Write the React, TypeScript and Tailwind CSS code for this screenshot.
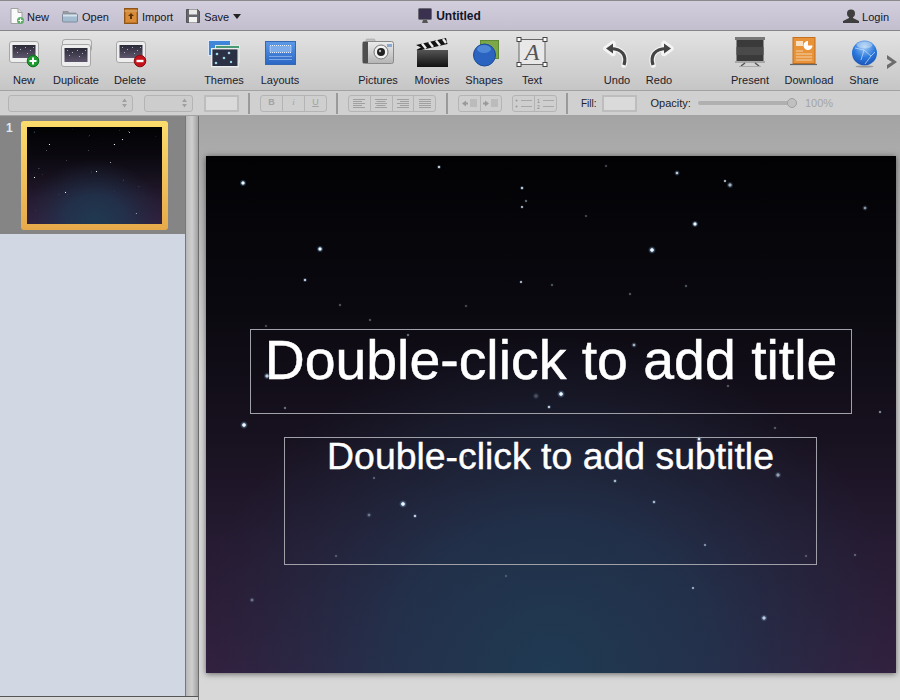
import React from "react";

const STARS: [number, number, number, number][] = [
  [37, 27, 1.8, 1], [114, 93, 1.8, 1], [99, 124, 1.2, 0.8], [38, 269, 2, 1], [446, 94, 2, 1], [489, 68, 1.8, 1],
  [316, 32, 1.2, 0.8], [316, 51, 1, 0.7], [233, 11, 1.2, 0.8], [471, 17, 1.5, 0.8], [524, 29, 1.8, 0.7], [519, 25, 1, 0.7],
  [659, 52, 1.5, 0.6], [355, 238, 2, 1], [197, 348, 2, 1], [209, 360, 1.2, 0.8], [343, 251, 1.2, 0.8], [315, 126, 1, 0.7],
  [409, 325, 1.2, 0.7], [448, 346, 1.2, 0.7], [572, 319, 1.8, 0.6], [558, 462, 1.8, 0.8], [487, 432, 1, 0.6], [499, 389, 1, 0.5],
  [61, 220, 1.8, 0.8], [79, 252, 1, 0.4], [166, 186, 1, 0.4], [428, 189, 1.5, 0.7], [202, 179, 1, 0.4], [320, 45, 1, 0.4],
  [674, 256, 1, 0.5], [569, 272, 1, 0.3], [649, 399, 1, 0.3], [164, 164, 1, 0.3], [134, 149, 1, 0.3], [346, 129, 1, 0.3],
  [424, 138, 1, 0.3], [168, 322, 1, 0.3], [260, 300, 1, 0.25], [522, 230, 1, 0.3], [130, 400, 1, 0.25], [300, 420, 1, 0.2],
  [600, 400, 1, 0.25], [480, 130, 1, 0.3], [380, 60, 1, 0.25], [60, 170, 1, 0.25], [260, 150, 1, 0.25], [400, 10, 1, 0.25],
  [46, 444, 1.5, 0.4], [163, 359, 1.5, 0.4], [493, 283, 1.5, 0.9], [330, 240, 2, 0.25],
];

function Space({ id, glow }: { id: string; glow: number }) {
  return (
    <svg viewBox="0 0 690 517" preserveAspectRatio="none" className="block h-full w-full">
      <defs>
        <linearGradient id={`${id}v`} x1="0" y1="0" x2="0" y2="1">
          <stop offset="0" stopColor="#020204" />
          <stop offset="0.3" stopColor="#0b0910" />
          <stop offset="0.55" stopColor="#181220" />
          <stop offset="0.75" stopColor="#261b32" />
          <stop offset="1" stopColor="#33203f" />
        </linearGradient>
        <radialGradient id={`${id}t`} cx="345" cy="517" r="1" gradientUnits="userSpaceOnUse" gradientTransform="translate(345 517) scale(360 340) translate(-345 -517)">
          <stop offset="0" stopColor="#1f3a52" stopOpacity="1" />
          <stop offset="0.45" stopColor="#203650" stopOpacity="0.75" />
          <stop offset="1" stopColor="#1f2c44" stopOpacity="0" />
        </radialGradient>
        <radialGradient id={`${id}s`}>
          <stop offset="0" stopColor="#ffffff" />
          <stop offset="0.35" stopColor="#e4f4ff" />
          <stop offset="0.55" stopColor="#9fd0ff" stopOpacity="0.35" />
          <stop offset="1" stopColor="#7fbfff" stopOpacity="0" />
        </radialGradient>
      </defs>
      <rect width="690" height="517" fill={`url(#${id}v)`} />
      <rect width="690" height="517" fill={`url(#${id}t)`} />
      {STARS.map(([x, y, r, o], i) => (
        <circle key={i} cx={x} cy={y} r={r * glow} fill={`url(#${id}s)`} opacity={o} />
      ))}
    </svg>
  );
}

function MiniSlide({ x = 0, y = 0, h = 22 }: { x?: number; y?: number; h?: number }) {
  const gid = `ms${x}${y}`;
  return (
    <g transform={`translate(${x} ${y})`}>
      <defs>
        <linearGradient id={gid} x1="0" y1="0" x2="0" y2="1">
          <stop offset="0" stopColor="#2b2a38" />
          <stop offset="1" stopColor="#5e566c" />
        </linearGradient>
      </defs>
      <rect x="0.5" y="0.5" width="29" height={h - 1} rx="2.5" fill="#eeeeee" stroke="#a6a6a6" />
      <rect x="3.5" y={4} width="23" height={h - 9} fill={`url(#${gid})`} />
      <g fill="#c4cfdf" opacity="0.8">
        <rect x="6" y="6" width="1" height="1" />
        <rect x="11" y="8" width="1" height="1" />
        <rect x="16" y="6" width="1" height="1" />
        <rect x="21" y="9" width="1" height="1" />
        <rect x="8" y="11" width="1" height="1" />
        <rect x="18" y="12" width="1" height="1" />
        <rect x="24" y="6" width="1" height="1" />
      </g>
    </g>
  );
}

const SZ = "block h-[34px] w-[42px] shrink-0";

const icons: Record<string, React.ReactNode> = {
  New: (
    <svg viewBox="0 0 42 34" className={SZ}>
      <MiniSlide x={6} y={5} />
      <circle cx="30" cy="25" r="5.8" fill="#1f9a2f" stroke="#0d6f1c" />
      <path d="M30 21.5v7M26.5 25h7" stroke="#fff" strokeWidth="2" />
    </svg>
  ),
  Duplicate: (
    <svg viewBox="0 0 42 34" className={SZ}>
      <rect x="7.5" y="3.5" width="29" height="12" rx="2.5" fill="#e8e8e8" stroke="#a8a8a8" />
      <MiniSlide x={6} y={8} h={23} />
    </svg>
  ),
  Delete: (
    <svg viewBox="0 0 42 34" className={SZ}>
      <MiniSlide x={7} y={5} />
      <circle cx="31" cy="25" r="5.8" fill="#c4121a" stroke="#8e0b10" />
      <path d="M27.5 25h7" stroke="#fff" strokeWidth="2.4" />
    </svg>
  ),
  Themes: (
    <svg viewBox="0 0 42 34" className={SZ}>
      <rect x="5.5" y="4.5" width="22" height="15" fill="#3f86d8" stroke="#dfe8f2" />
      <rect x="12.5" y="9.5" width="24" height="17" fill="#4a9a78" stroke="#dfe8e2" />
      <rect x="8.7" y="12.7" width="26.5" height="18" fill="#2b3044" stroke="#ececec" strokeWidth="1.4" />
      <g fill="#9fd6e2">
        <circle cx="14" cy="18" r="1.3" />
        <circle cx="26" cy="17" r="1.3" />
        <circle cx="21" cy="22" r="1.3" />
        <circle cx="13" cy="27" r="1.3" />
        <circle cx="28" cy="26" r="1.2" />
      </g>
    </svg>
  ),
  Layouts: (
    <svg viewBox="0 0 42 34" className={SZ}>
      <defs>
        <linearGradient id="lay" x1="0" y1="0" x2="0" y2="1">
          <stop offset="0" stopColor="#5c9ae8" />
          <stop offset="1" stopColor="#2a66c4" />
        </linearGradient>
      </defs>
      <rect x="6.5" y="5.5" width="30" height="23" fill="url(#lay)" stroke="#3568b4" />
      <rect x="11" y="9.5" width="21" height="7" fill="#7fadea" stroke="#e6effa" strokeDasharray="1 1" />
      <path d="M10 20.5h23M10 23.5h23" stroke="#7fa8e4" />
    </svg>
  ),
  Pictures: (
    <svg viewBox="0 0 42 34" className={SZ}>
      <defs>
        <linearGradient id="cam" x1="0" y1="0" x2="0" y2="1">
          <stop offset="0" stopColor="#ececec" />
          <stop offset="1" stopColor="#b4b4b4" />
        </linearGradient>
      </defs>
      <rect x="9" y="3" width="9" height="3" rx="1" fill="#c0c0c0" stroke="#999" strokeWidth=".5" />
      <rect x="5.5" y="5.5" width="31" height="22" rx="2" fill="url(#cam)" stroke="#8a8a8a" />
      <rect x="6" y="6" width="5" height="21" fill="#4e4e4e" />
      <circle cx="24" cy="16" r="7" fill="#f2f2f2" stroke="#777" />
      <circle cx="24" cy="16" r="4" fill="#222" />
      <circle cx="23" cy="15" r="1.2" fill="#bbb" />
      <rect x="30" y="8" width="5" height="3" fill="#8aa8d0" />
    </svg>
  ),
  Movies: (
    <svg viewBox="0 0 42 34" className={SZ}>
      <path d="M5 9 35 2l1.5 6L6 15z" fill="#111" />
      <path d="M11 7.5l4 5M18 6l4 5M25 4.5l4 5M32 3l3 4" stroke="#eee" strokeWidth="2.4" />
      <defs>
        <linearGradient id="clap" x1="0" y1="0" x2="0" y2="1">
          <stop offset="0" stopColor="#555" />
          <stop offset="1" stopColor="#111" />
        </linearGradient>
      </defs>
      <path d="M6 14h31v17H6z" fill="url(#clap)" />
      <path d="M5 9l5 2.5-5 2.5z" fill="#ddd" />
    </svg>
  ),
  Shapes: (
    <svg viewBox="0 0 42 34" className={SZ}>
      <rect x="17.5" y="4.5" width="18" height="18" fill="#7da84a" stroke="#5f8a34" />
      <circle cx="21.5" cy="19" r="11" fill="#2a64c0" stroke="#1c4a94" />
      <ellipse cx="21" cy="13" rx="7" ry="4" fill="#5c96e0" opacity="0.7" />
    </svg>
  ),
  Text: (
    <svg viewBox="0 0 42 34" className={SZ}>
      <rect x="8" y="3.5" width="26" height="25" fill="#e8e8e8" stroke="#666" />
      <text x="21" y="24" textAnchor="middle" fontFamily="'Liberation Serif', serif" fontStyle="italic" fontSize="24" fill="#555">A</text>
      <g fill="#fff" stroke="#444">
        <rect x="6" y="1.5" width="4" height="4" />
        <rect x="32" y="1.5" width="4" height="4" />
        <rect x="6" y="26.5" width="4" height="4" />
        <rect x="32" y="26.5" width="4" height="4" />
      </g>
    </svg>
  ),
  Undo: (
    <svg viewBox="0 0 42 34" className={SZ}>
      <path d="M28 29C31 19 26 13 15 12.5M10 12.5l7-5v10z" fill="none" stroke="#f4f4f4" strokeWidth="5.5" strokeLinejoin="round" strokeLinecap="round" />
      <path d="M10 12.5l7-5v10z" fill="#444" />
      <path d="M28 29C31 19 26 13 15 12.5" fill="none" stroke="#444" strokeWidth="3.2" />
    </svg>
  ),
  Redo: (
    <svg viewBox="0 0 42 34" className={SZ}>
      <path d="M15 29C12 19 17 13 28 12.5M33 12.5l-7-5v10z" fill="none" stroke="#f4f4f4" strokeWidth="5.5" strokeLinejoin="round" strokeLinecap="round" />
      <path d="M33 12.5l-7-5v10z" fill="#444" />
      <path d="M15 29C12 19 17 13 28 12.5" fill="none" stroke="#444" strokeWidth="3.2" />
    </svg>
  ),
  Present: (
    <svg viewBox="0 0 42 34" className={SZ}>
      <rect x="6" y="1" width="30" height="3" fill="#777" />
      <rect x="7.5" y="4" width="27" height="21" fill="#3a3a3a" />
      <rect x="7.5" y="11" width="27" height="8" fill="#4a4a4a" />
      <path d="M6 26h30" stroke="#999" strokeWidth="1.5" />
      <path d="M16 27l-4 3M26 27l4 3" stroke="#555" strokeWidth="1.5" />
      <path d="M10 30.5h22" stroke="#aaa" />
    </svg>
  ),
  Download: (
    <svg viewBox="0 0 42 34" className={SZ}>
      <rect x="5" y="1.5" width="22" height="26" fill="#e8923a" stroke="#c46f1e" />
      <rect x="8" y="5" width="7" height="5" fill="#f8e0c0" />
      <path d="M20 5a4.5 4.5 0 1 0 4.5 4.5H20z" fill="#fff" />
      <path d="M8 15h7M8 18h16M8 21h16M8 24h16" stroke="#f6d4a8" />
      <path d="M2 28.5h27" stroke="#666" strokeWidth="1.2" />
    </svg>
  ),
  Share: (
    <svg viewBox="0 0 42 34" className={SZ}>
      <defs>
        <radialGradient id="glb" cx="0.5" cy="0.25" r="0.8">
          <stop offset="0" stopColor="#9fcaf5" />
          <stop offset="0.55" stopColor="#2a78dc" />
          <stop offset="1" stopColor="#1a4fb0" />
        </radialGradient>
      </defs>
      <circle cx="21.5" cy="17" r="12.5" fill="url(#glb)" />
      <path d="M12 12l9 2 7 6 4-4M21 14l-3 10M28 20l-6 8" stroke="#cfe4fa" strokeWidth="0.7" fill="none" />
      <ellipse cx="21.5" cy="9" rx="8" ry="3.5" fill="#fff" opacity="0.35" />
      <ellipse cx="21.5" cy="30.5" rx="9" ry="1" fill="#999" />
    </svg>
  ),
};

const TOOLS: { n: string; cls: string }[] = [
  { n: "New", cls: "w-12" },
  { n: "Duplicate", cls: "ml-1 w-12" },
  { n: "Delete", cls: "ml-[6px] w-12" },
  { n: "Themes", cls: "ml-[46px] w-12" },
  { n: "Layouts", cls: "ml-2 w-12" },
  { n: "Pictures", cls: "ml-[50px] w-12" },
  { n: "Movies", cls: "ml-[6px] w-12" },
  { n: "Shapes", cls: "ml-1 w-12" },
  { n: "Text", cls: "w-12" },
  { n: "Undo", cls: "ml-[41px] w-10" },
  { n: "Redo", cls: "ml-[2px] w-10" },
  { n: "Present", cls: "ml-[47px] w-12" },
  { n: "Download", cls: "ml-[7px] w-14" },
  { n: "Share", cls: "ml-[3px] w-12" },
];

function Sep() {
  return <div className="h-[21px] w-[2px] bg-[#9a9a9a]" />;
}

function Segs({ cls, items }: { cls: string; items: React.ReactNode[] }) {
  return (
    <div className={`flex h-[17px] rounded-[3px] border border-[#b4b4b4] bg-[#cfcfcf] ${cls}`}>
      {items.map((c, i) => (
        <div key={i} className="flex flex-1 items-center justify-center border-r border-[#b4b4b4] text-[#a2a2a2] last:border-r-0">
          {c}
        </div>
      ))}
    </div>
  );
}

function Align({ k }: { k: "l" | "c" | "r" | "j" }) {
  const rows = [10, 7, 10, 7, 10];
  return (
    <svg viewBox="0 0 12 9" className="block h-[9px] w-3">
      {rows.map((w, i) => {
        const len = k === "j" ? 12 : w + 2;
        const x = k === "l" || k === "j" ? 0 : k === "r" ? 12 - len : (12 - len) / 2;
        return <rect key={i} x={x} y={i * 2} width={len} height="1" fill="#a0a0a0" />;
      })}
    </svg>
  );
}

function Indent({ flip }: { flip?: boolean }) {
  return (
    <svg viewBox="0 0 15 9" className="block h-[9px] w-[15px]">
      <path d={flip ? "M2 1.5l4 3-4 3zM0 3.5h2v2H0z" : "M4 1.5l-4 3 4 3zM4 3.5h2v2H4z"} fill="#9a9a9a" />
      <path d="M8 1h7M8 3h7M8 5h7M8 7h7" stroke="#a8a8a8" />
    </svg>
  );
}

function ListIc({ num }: { num?: boolean }) {
  return (
    <svg viewBox="0 0 17 11" className="block h-[11px] w-[17px]">
      {num ? (
        <>
          <text x="0" y="5" fontSize="5" fontFamily="'Liberation Sans', sans-serif" fill="#888">1</text>
          <text x="0" y="11" fontSize="5" fontFamily="'Liberation Sans', sans-serif" fill="#888">2</text>
        </>
      ) : (
        <>
          <circle cx="1.5" cy="2.5" r="1" fill="#999" />
          <circle cx="1.5" cy="8.5" r="1" fill="#999" />
        </>
      )}
      <path d="M6 2.5h11M6 8.5h11" stroke="#a8a8a8" />
    </svg>
  );
}

function Updown() {
  return (
    <svg viewBox="0 0 7 10" className="h-[10px] w-[7px]">
      <path d="M3.5 0.5 6 4H1zM3.5 9.5 1 6h5z" fill="#a0a0a0" />
    </svg>
  );
}

export default function App() {
  return (
    <div className="flex h-[700px] w-[900px] flex-col overflow-hidden bg-[#d8d8d8] font-['Liberation_Sans',Arial,sans-serif] text-[11px] text-[#14142a]">
      {/* menu bar */}
      <div className="flex h-[31px] shrink-0 items-center border-y border-t-[#8a8a8a] border-b-[#868686] bg-gradient-to-b from-[#d2cedd] to-[#c4bfcf] pl-[10px] pr-[11px]">
        <svg viewBox="0 0 14 16" className="h-4 w-[14px]">
          <path d="M1 .5h7l4 4v11H1z" fill="#fafafa" stroke="#a0a0a0" />
          <path d="M8 .5v4h4" fill="#ddd" stroke="#a0a0a0" />
          <circle cx="10.5" cy="12.5" r="3.5" fill="#5fae6a" />
          <path d="M10.5 10.5v4M8.5 12.5h4" stroke="#fff" />
        </svg>
        <span className="ml-[3px] pt-[3px]">New</span>
        <svg viewBox="0 0 16 14" className="ml-[13px] h-[14px] w-4">
          <path d="M1 2.5h5l1 1.5h7v2H1z" fill="#9a9ca4" stroke="#777" strokeWidth=".5" />
          <rect x="0.5" y="5" width="15" height="8" rx="1" fill="#a3bcd0" stroke="#7e8c9a" />
          <rect x="1" y="5.5" width="14" height="2" fill="#d6e2ec" />
        </svg>
        <span className="ml-[4px] pt-[3px]">Open</span>
        <svg viewBox="0 0 14 16" className="ml-[15px] h-4 w-[14px]">
          <rect x="0.5" y="0.5" width="13" height="15" fill="#bf7526" stroke="#8f5518" />
          <rect x="2" y="4" width="10" height="10" fill="#d98c38" />
          <path d="M7 5l3 3H8v3H6V8H4z" fill="#5c3206" />
          <path d="M0.5 3h13" stroke="#f0c080" />
        </svg>
        <span className="ml-[4px] pt-[3px]">Import</span>
        <svg viewBox="0 0 14 16" className="ml-[13px] h-4 w-[14px]">
          <path d="M.5 1.5h11l2 2v11H.5z" fill="#66666c" stroke="#555" />
          <rect x="3" y="1.5" width="8" height="5" fill="#e8e8e8" />
          <rect x="3" y="9" width="8" height="5.5" fill="#f2f2f2" />
        </svg>
        <span className="ml-[4px] pt-[3px]">Save</span>
        <svg viewBox="0 0 8 5" className="ml-[4px] mt-[2px] h-[5px] w-2">
          <path d="M0 0h8L4 5z" fill="#222" />
        </svg>
        <svg viewBox="0 0 14 15" className="ml-[177px] h-[15px] w-[14px]">
          <rect x="0.5" y="0.5" width="13" height="11" rx="1" fill="#3a3050" stroke="#6a6a70" />
          <path d="M5 12h4l1 3H4z" fill="#555" />
        </svg>
        <span className="ml-[4px] pt-[1px] text-[12px] font-bold">Untitled</span>
        <svg viewBox="0 0 16 14" className="ml-auto h-[14px] w-4">
          <circle cx="8" cy="4.5" r="4" fill="#3e3e3e" />
          <path d="M6 7h4v2l6 3v2H0v-2l6-3z" fill="#3e3e3e" />
        </svg>
        <span className="ml-[3px] pt-[3px]">Login</span>
      </div>

      {/* tool bar */}
      <div className="relative flex h-[59px] shrink-0 items-start bg-gradient-to-b from-[#e2e2e2] to-[#c6c6c6] pt-[5px]">
        {TOOLS.map((t) => (
          <div key={t.n} className={`flex shrink-0 flex-col items-center ${t.cls}`}>
            {icons[t.n]}
            <span className="mt-[4px] whitespace-nowrap text-[11px] leading-[13px] text-[#20202c]">{t.n}</span>
          </div>
        ))}
        <svg viewBox="0 0 10 14" className="ml-[-1px] mt-[19px] h-[14px] w-[10px] shrink-0">
          <path d="M0 0l10 7-10 7 0-4 5-3-5-3z" fill="#6c6c6c" />
        </svg>
      </div>

      {/* format bar */}
      <div className="flex h-[26px] shrink-0 items-center border-y border-[#a2a2a2] bg-[#d0d0d0] pl-2 text-[10px]">
        <div className="flex h-[17px] w-[125px] items-center justify-end rounded-[3px] border border-[#b4b4b4] bg-[#cdcdcd] pr-[4px]"><Updown /></div>
        <div className="ml-[11px] flex h-[17px] w-[49px] items-center justify-end rounded-[3px] border border-[#b4b4b4] bg-[#cdcdcd] pr-[4px]"><Updown /></div>
        <div className="ml-[11px] h-[17px] w-[35px] border-2 border-[#bdbdbd] bg-[#dadada]" />
        <div className="ml-[9px]"><Sep /></div>
        <Segs
          cls="ml-[10px] w-[67px] text-[9px]"
          items={[<b key="b">B</b>, <i key="i" className="font-['Liberation_Serif',serif]">i</i>, <u key="u">U</u>]}
        />
        <div className="ml-[9px]"><Sep /></div>
        <Segs cls="ml-[10px] w-[88px]" items={[<Align key="l" k="l" />, <Align key="c" k="c" />, <Align key="r" k="r" />, <Align key="j" k="j" />]} />
        <div className="ml-[10px]"><Sep /></div>
        <Segs cls="ml-[10px] w-[44px]" items={[<Indent key="a" />, <Indent key="b" flip />]} />
        <Segs cls="ml-[10px] w-[45px]" items={[<ListIc key="a" />, <ListIc key="b" num />]} />
        <div className="ml-[9px]"><Sep /></div>
        <span className="ml-[13px] text-[#222]">Fill:</span>
        <div className="ml-[5px] h-[17px] w-[35px] border-2 border-[#bdbdbd] bg-[#dadada]" />
        <span className="ml-[14px] text-[11px] text-[#222]">Opacity:</span>
        <div className="relative ml-[7px] h-[4px] w-[99px] rounded-full bg-[#b0b0b0]">
          <div className="absolute right-0 top-[-3px] h-[10px] w-[10px] rounded-full border border-[#a0a0a0] bg-[#c0c0c0]" />
        </div>
        <span className="ml-[8px] text-[11px] text-[#a4a4a4]">100%</span>
      </div>

      {/* body */}
      <div className="flex min-h-0 flex-1">
        <aside className="flex w-[186px] shrink-0 flex-col bg-[#d1d8e4]">
          <div className="flex min-h-0 flex-1 flex-col border-r border-[#777]">
            <div className="flex h-[118px] shrink-0 items-start bg-[#858585] pl-[6px] pt-[5px]">
              <span className="w-[15px] text-[12px] font-bold leading-[14px] text-[#dfeaf5]">1</span>
              <div className="h-[109px] w-[147px] rounded-[3px] bg-gradient-to-b from-[#fbdc6c] to-[#e6a94a] p-[6px]">
                <Space id="th" glow={2.6} />
              </div>
            </div>
          </div>
          <div className="h-[4px] shrink-0 border-t border-[#555] bg-[#d8d8d8]" />
        </aside>
        <div className="flex w-[13px] shrink-0 flex-col border-r border-[#6e6e6e]">
          <div className="flex-1 bg-gradient-to-r from-[#b8b8b8] via-[#cfcfcf] to-[#a0a0a0]" />
          <div className="h-[4px] shrink-0 border-t border-[#555] bg-[#d8d8d8]" />
        </div>
        <main className="relative min-w-0 flex-1 bg-gradient-to-b from-[#a4a4a4] from-[0px] to-[#d8d8d8] to-[260px] pl-[7px] pt-[40px]">
          <div className="relative h-[517px] w-[690px] shadow-[0_1px_6px_rgba(0,0,0,0.55)]">
            <Space id="sl" glow={2} />
            <div className="absolute left-[44px] top-[173px] flex h-[85px] w-[602px] items-start justify-center border border-[#a0a0a8] text-[55.4px] leading-[60px] text-white [-webkit-text-stroke:0.5px_white]">
              <span className="whitespace-nowrap">Double-click to add title</span>
            </div>
            <div className="absolute left-[78px] top-[281px] flex h-[128px] w-[533px] items-start justify-center border border-[#a0a0a8] text-[37.4px] leading-[36px] text-white [-webkit-text-stroke:0.4px_white]">
              <span className="whitespace-nowrap">Double-click to add subtitle</span>
            </div>
          </div>
        </main>
      </div>
    </div>
  );
}
